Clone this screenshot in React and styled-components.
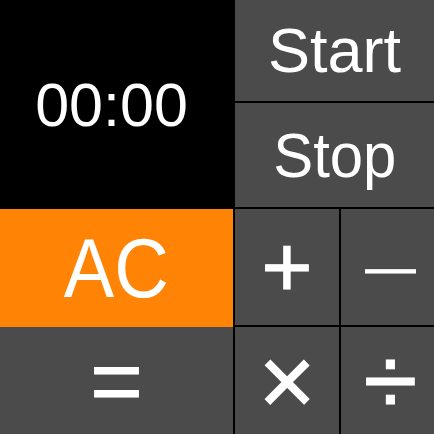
import React from 'react'
import styled, { createGlobalStyle } from 'styled-components'

const GlobalStyle = createGlobalStyle`
  html, body {
    margin: 0;
    padding: 0;
    background: #000;
  }
  body {
    font-family: "Liberation Sans", Arial, sans-serif;
  }
`

const App = () => {
  return (
    <>
      <GlobalStyle />
      <Pad>
        <LeftCol>
          <Display>00:00</Display>
          <Key color='#ff8305' h='118px' size='84px'><Label squeeze={0.9}>AC</Label></Key>
          <Key grow size='90px'><Label bold>=</Label></Key>
        </LeftCol>
        <RightCol>
          <Key h='101px' size='63px'><Label>Start</Label></Key>
          <Key h='104px' size='63px'><Label squeeze={0.95}>Stop</Label></Key>
          <OpRow h='116px'>
            <Key w='104px' size='88px'><Label bold>+</Label></Key>
            <Key grow nudge size='50px'><Label bold>—</Label></Key>
          </OpRow>
          <OpRow grow>
            <Key w='104px' size='98px'><Label bold>×</Label></Key>
            <Key grow nudge size='98px'><Label bold>÷</Label></Key>
          </OpRow>
        </RightCol>
      </Pad>
    </>
  )
}

export default App

const Pad = styled.div`
  display:flex;
  gap:2px;
  width:434px;
  height:434px;
  background:#000;
  overflow:hidden;
`

const LeftCol = styled.div`
  display:flex;
  flex-direction:column;
  width:233px;
`

const RightCol = styled.div`
  display:flex;
  flex-direction:column;
  gap:2px;
  flex:1;
`

const OpRow = styled.div`
  display:flex;
  gap:2px;
  height:${p => p.h || 'auto'};
  flex:${p => p.grow ? 1 : 'none'};
`

const Display = styled.div`
  height:209px;
  display:flex;
  align-items:center;
  justify-content:center;
  padding-right:10px;
  box-sizing:border-box;
  color:#fff;
  font-size:61px;
  background:#000;
`

const Key = styled.button`
  display:flex;
  align-items:center;
  justify-content:center;
  border:none;
  padding:0 0 0 ${p => p.nudge ? '6px' : '0'};
  margin:0;
  background:${p => p.color || '#4b4b4b'};
  color:#fff;
  font-family:"Liberation Sans", Arial, sans-serif;
  font-size:${p => p.size};
  line-height:1;
  height:${p => p.h || 'auto'};
  width:${p => p.w || 'auto'};
  flex:${p => p.grow ? 1 : 'none'};
`

const Label = styled.span`
  display:inline-block;
  transform:${p => p.squeeze ? `scaleX(${p.squeeze})` : 'none'};
  -webkit-text-stroke:${p => p.bold ? '1px #fff' : '0'};
`
